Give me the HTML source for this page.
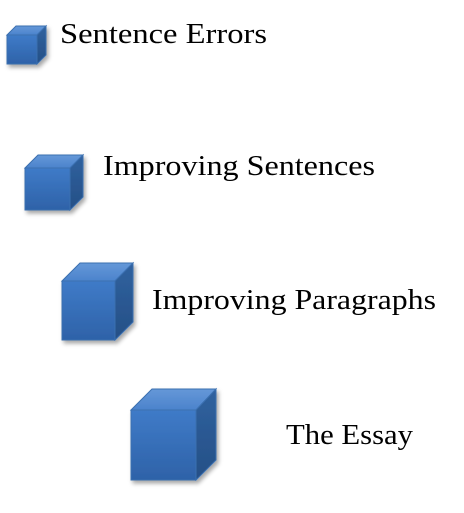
<!DOCTYPE html>
<html><head><style>
html,body{margin:0;padding:0;background:#fff;width:464px;height:513px;overflow:hidden}
svg{display:block}
text{font-family:"Liberation Serif",serif;font-size:28px;fill:#000}
</style></head><body>
<svg width="464" height="513" xmlns="http://www.w3.org/2000/svg">
<defs>
<linearGradient id="f" x1="0" y1="0" x2="0" y2="1"><stop offset="0" stop-color="#3f7bc8"/><stop offset="1" stop-color="#2e62a8"/></linearGradient>
<linearGradient id="t" x1="0" y1="0" x2="0" y2="1"><stop offset="0" stop-color="#6598d8"/><stop offset="1" stop-color="#4b83cc"/></linearGradient>
<linearGradient id="s" x1="0" y1="0" x2="0" y2="1"><stop offset="0" stop-color="#30629f"/><stop offset="1" stop-color="#254f86"/></linearGradient>
<filter id="sh" x="-20%" y="-20%" width="150%" height="150%"><feDropShadow dx="2" dy="3" stdDeviation="2" flood-color="#000" flood-opacity="0.35"/></filter>
</defs>
<g stroke="#3a6fb0" stroke-width="1" filter="url(#sh)">
<g>
<path d="M7 35 L16 26 L46 26 L37 35 Z" fill="url(#t)"/>
<path d="M37 35 L46 26 L46 55 L37 64 Z" fill="url(#s)"/>
<rect x="7" y="35" width="30" height="29" fill="url(#f)"/>
</g>
<g>
<path d="M25 168 L38 155 L83 155 L70 168 Z" fill="url(#t)"/>
<path d="M70 168 L83 155 L83 197 L70 210 Z" fill="url(#s)"/>
<rect x="25" y="168" width="45" height="42" fill="url(#f)"/>
</g>
<g>
<path d="M62 281 L80 263 L133 263 L115 281 Z" fill="url(#t)"/>
<path d="M115 281 L133 263 L133 322 L115 340 Z" fill="url(#s)"/>
<rect x="62" y="281" width="53" height="59" fill="url(#f)"/>
</g>
<g>
<path d="M131 410 L152 389 L216 389 L196 410 Z" fill="url(#t)"/>
<path d="M196 410 L216 389 L216 460 L196 480 Z" fill="url(#s)"/>
<rect x="131" y="410" width="65" height="70" fill="url(#f)"/>
</g>
</g>
<text x="60" y="43" textLength="207" lengthAdjust="spacingAndGlyphs">Sentence Errors</text>
<text x="103" y="175" textLength="272" lengthAdjust="spacingAndGlyphs">Improving Sentences</text>
<text x="152" y="309" textLength="284" lengthAdjust="spacingAndGlyphs">Improving Paragraphs</text>
<text x="286" y="444" textLength="127" lengthAdjust="spacingAndGlyphs">The Essay</text>
</svg>
</body></html>
